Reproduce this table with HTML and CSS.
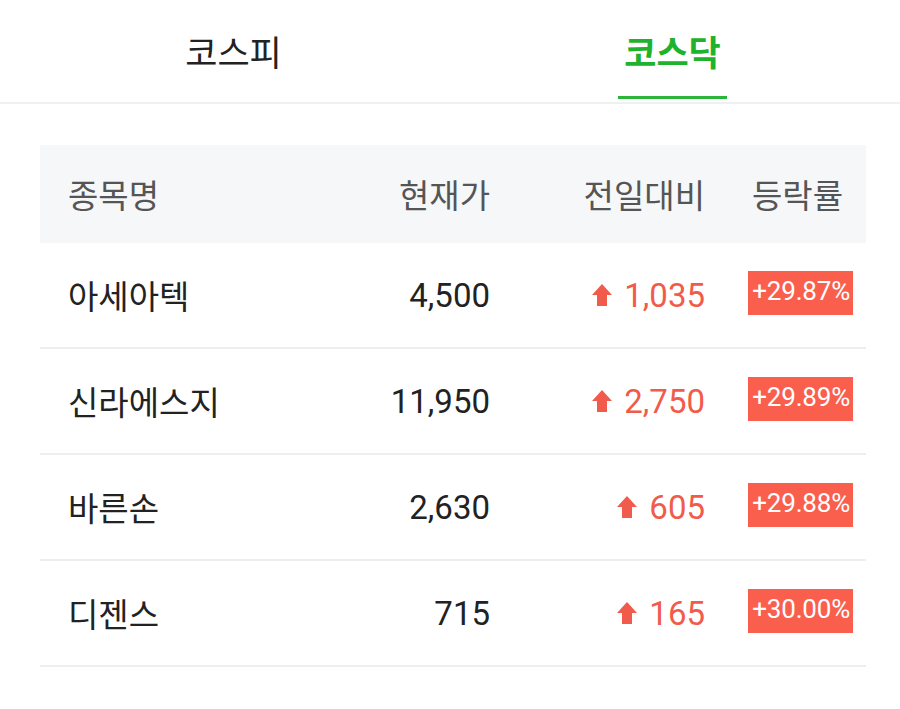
FILE: index.html
```html
<!DOCTYPE html>
<html lang="ko">
<head>
<meta charset="utf-8">
<link rel="stylesheet" href="styles.css">
</head>
<body>
<nav class="tabs">
  <div class="tab"><span class="tab-label">코스피</span></div>
  <div class="tab active"><span class="tab-label">코스닥</span></div>
</nav>
<section class="table">
  <div class="row head">
    <div class="c-name">종목명</div>
    <div class="c-price">현재가</div>
    <div class="c-diff">전일대비</div>
    <div class="c-rate">등락률</div>
  </div>
  <div class="row">
    <div class="c-name">아세아텍</div>
    <div class="c-price">4,500</div>
    <div class="c-diff up"><svg class="arrow" viewBox="0 0 20 22"><path d="M10 0 L20 11 L15 11 L15 22 L5 22 L5 11 L0 11 Z"/></svg>1,035</div>
    <div class="c-rate"><span class="badge">+29.87%</span></div>
  </div>
  <div class="row">
    <div class="c-name">신라에스지</div>
    <div class="c-price">11,950</div>
    <div class="c-diff up"><svg class="arrow" viewBox="0 0 20 22"><path d="M10 0 L20 11 L15 11 L15 22 L5 22 L5 11 L0 11 Z"/></svg>2,750</div>
    <div class="c-rate"><span class="badge">+29.89%</span></div>
  </div>
  <div class="row">
    <div class="c-name">바른손</div>
    <div class="c-price">2,630</div>
    <div class="c-diff up"><svg class="arrow" viewBox="0 0 20 22"><path d="M10 0 L20 11 L15 11 L15 22 L5 22 L5 11 L0 11 Z"/></svg>605</div>
    <div class="c-rate"><span class="badge">+29.88%</span></div>
  </div>
  <div class="row">
    <div class="c-name">디젠스</div>
    <div class="c-price">715</div>
    <div class="c-diff up"><svg class="arrow" viewBox="0 0 20 22"><path d="M10 0 L20 11 L15 11 L15 22 L5 22 L5 11 L0 11 Z"/></svg>165</div>
    <div class="c-rate"><span class="badge">+30.00%</span></div>
  </div>
</section>
</body>
</html>
```

FILE: styles.css
```css
* { box-sizing: border-box; }
html, body {
  margin: 0;
  padding: 0;
  background: #ffffff;
  font-family: Roboto, "Noto Sans CJK KR", sans-serif;
  color: #222222;
}
.tabs {
  display: flex;
  padding: 0 8px 0 14px;
  border-bottom: 2px solid #eef0f2;
}
.tab {
  flex: 1;
  height: 102px;
  display: flex;
  justify-content: center;
}
.tab-label {
  display: flex;
  align-items: center;
  padding: 4px 6px 0;
  height: 99px;
  font-size: 35px;
  color: #222222;
  border-bottom: 3px solid transparent;
}
.tab.active .tab-label {
  color: #1fb22c;
  font-weight: 700;
  border-bottom-color: #2bb53a;
}
.table {
  margin: 41px 34px 0 40px;
}
.row {
  display: grid;
  grid-template-columns: 1fr 200px 215px 148px;
  align-items: center;
  height: 106px;
  padding: 0 13px 0 28px;
  border-bottom: 2px solid #eeeeee;
  font-size: 33px;
}
.row.head {
  height: 98px;
  background: #f6f7f9;
  border-bottom: none;
  color: #555555;
  font-size: 33px;
}
.c-price, .c-diff { text-align: right; }
.c-diff {
  display: flex;
  justify-content: flex-end;
  align-items: center;
}
.up { color: #f15b4b; }
.arrow {
  width: 20px;
  height: 22px;
  fill: #f15b4b;
  margin-right: 12px;
}
.c-rate {
  text-align: right;
}
.row.head .c-rate { padding-right: 10px; }
.badge {
  display: inline-block;
  background: #fa5f4e;
  color: #ffffff;
  font-size: 26px;
  line-height: 40px;
  height: 44px;
  padding: 0 3px 0 4px;
  letter-spacing: -0.2px;
  position: relative;
  top: -2px;
  vertical-align: middle;
}
```
